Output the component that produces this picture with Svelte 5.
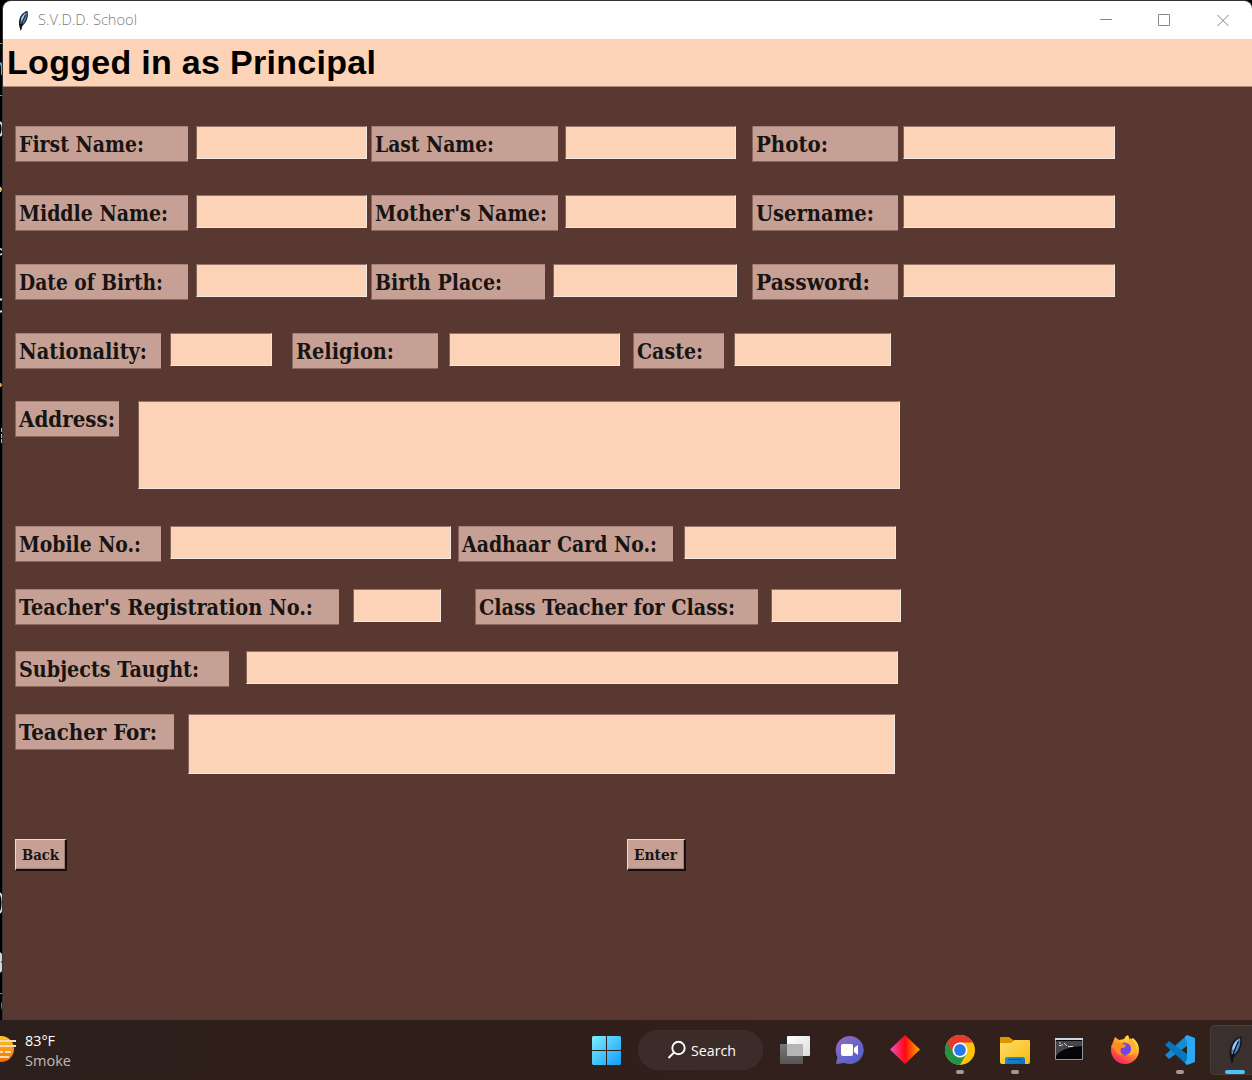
<script>
  // Every form row starts at the window's left padding; x and w are in pixels, t is the caption's width.
  const L = (text, x, w, t) => ({ text, x, w, t });
  const E = (x, w, h = 33) => ({ x, w, h });
  const source = [
    { h: 69, items: [L('First Name:', 15, 173, 125), E(196, 171), L('Last Name:', 371, 187, 119), E(565, 171), L('Photo:', 752, 146, 72), E(903, 212)] },
    { h: 69, items: [L('Middle Name:', 15, 173, 149), E(196, 171), L("Mother's Name:", 371, 187, 172), E(565, 171), L('Username:', 752, 146, 118), E(903, 212)] },
    { h: 69, items: [L('Date of Birth:', 15, 173, 144), E(196, 171), L('Birth Place:', 371, 174, 127), E(553, 184), L('Password:', 752, 146, 114), E(903, 212)] },
    { h: 68, items: [L('Nationality:', 15, 146, 128), E(170, 102), L('Religion:', 292, 146, 98), E(449, 171), L('Caste:', 633, 91, 66), E(734, 157)] },
    { h: 125, items: [L('Address:', 15, 104, 96), E(138, 762, 88)] },
    { h: 63, items: [L('Mobile No.:', 15, 146, 122), E(170, 281), L('Aadhaar Card No.:', 458, 215, 195), E(684, 212)] },
    { h: 62, items: [L("Teacher's Registration No.:", 15, 324, 294), E(353, 88), L('Class Teacher for Class:', 475, 283, 256), E(771, 130)] },
    { h: 63, items: [L('Subjects Taught:', 15, 214, 180), E(246, 652)] },
    { h: 125, items: [L('Teacher For:', 15, 159, 138), E(188, 707, 60)] }
  ];
  const rows = source.map((row) => {
    let edge = 3;
    return {
      h: row.h,
      items: row.items.map((item) => {
        const gap = item.x - edge;
        edge = item.x + item.w;
        return { ...item, gap };
      })
    };
  });
</script>

{#snippet fit(text, width, height, base, adjust = 'spacingAndGlyphs')}
  <svg class="fit" {width} {height}><text x="0" y={base} textLength={width} lengthAdjust={adjust}>{text}</text></svg>
{/snippet}

{#snippet feather()}
  <path d="M0 20C-2 10 2 1 11-2c2 6 0 15-6 20l-2 3-1 5z" fill="#14171c" />
  <path d="M1.500 16C1 9 4 2.500 10 0c1 5-1 12-5 16z" fill="#4b83c5" />
  <path d="M2.500 12C2 8 5 3.500 8.500 1.500L4.500 11z" fill="#b4cce5" />
  <path d="M2.300 24Q3 13 8.500 3.500" fill="none" stroke="#111" stroke-width="1.300" />
{/snippet}

<div class="screen">
  <div class="desktop">
    <svg class="behind" width="3" height="1020">
      <path d="M0 43.500h3M0 95.500h3M0 993.500h3" stroke="#6e9db2" />
      <path d="M0 63q2 1 2 5v7" fill="none" stroke="#4ab2dd" stroke-width="2" />
      <path d="M0 122q2.500 2 2.500 7t-2.500 7M0 893q2.500 3 2.500 10t-2.500 10" fill="none" stroke="#d7e8f4" stroke-width="1.800" />
      <path d="M0 187h1l1 2-1 3H0z" fill="#e6c377" />
      <path d="M0 249q3 0 3 4l-3 2" fill="none" stroke="#d9e3e8" stroke-width="1.500" />
      <path d="M0 299.500h3M0 311.500h3" stroke="#e4e4ee" stroke-width="2" />
      <path d="M2.500 300v11" stroke="#3535a0" />
      <path d="M0 383h1l1 2-1 2H0z" fill="#e6a65b" />
      <path d="M1 430h2M1 436h2M1 441h2" stroke="#a4bac7" stroke-width="4" />
      <path d="M0 952l3 3v5l-2 2 2 2v6l-3 3z" fill="#d5d5d5" />
      <path d="M3 1001q-2 4 0 10" fill="none" stroke="#cbba86" stroke-width="1.500" />
    </svg>
    <main class="window">
      <header class="titlebar">
        <svg class="logo" width="14" height="21" viewBox="-3 -3 16 29">{@render feather()}</svg>
        <span class="title">{@render fit('S.V.D.D. School', 99, 20, 15)}</span>
        <svg class="controls" width="160" height="38" fill="none" stroke="#858585">
          <path d="M8 18.500h12M125.500 14l11 11M136.500 14l-11 11" />
          <rect x="66.500" y="13.500" width="11" height="11" rx=".5" />
        </svg>
      </header>
      <div class="banner">{@render fit('Logged in as Principal', 369, 46, 35, 'spacing')}</div>
      <form class="form">
        {#each rows as row}
          <div class="row" style:height="{row.h}px">
            {#each row.items as item}
              {#if item.text}
                <span class="label" style:width="{item.w}px" style:margin-left="{item.gap}px">
                  {@render fit(item.text, item.t, 36, 26)}
                </span>
              {:else}
                <span class="entry" style:width="{item.w}px" style:height="{item.h}px" style:margin-left="{item.gap}px"></span>
              {/if}
            {/each}
          </div>
        {/each}
        <div class="actions">
          <button type="button" class="back">{@render fit('Back', 37, 30, 20)}</button>
          <button type="button" class="enter">{@render fit('Enter', 43, 30, 20)}</button>
        </div>
      </form>
    </main>
  </div>

  <footer class="taskbar">
    <div class="weather">
      <svg width="18" height="60">
        <defs><linearGradient id="sun" x2="0" y2="1"><stop stop-color="#ffc52b" /><stop offset="1" stop-color="#f56b0c" /></linearGradient></defs>
        <circle cx="1" cy="29" r="13" fill="url(#sun)" />
        <path d="M0 21h16M0 26h16M0 32h3M5 32h6M0 37h9" stroke="#f8ddb0" stroke-width="2" />
      </svg>
      <div class="readings">
        <span>{@render fit('83°F', 30, 20, 15)}</span>
        <span class="dim">{@render fit('Smoke', 46, 20, 15)}</span>
      </div>
    </div>
    <svg class="start" width="30" height="60">
      <defs><linearGradient id="win" gradientUnits="userSpaceOnUse" x1="0" y1="16" x2="29" y2="45"><stop stop-color="#7eeeff" /><stop offset="1" stop-color="#109cfb" /></linearGradient></defs>
      <path d="M1 16h13v14H0V17zM15 16h13l1 1v13H15zM0 31h14v14H1l-1-1zM15 31h14v13l-1 1H15z" fill="url(#win)" />
    </svg>
    <div class="search">
      <svg width="20" height="20" fill="none" stroke="#fff" stroke-width="1.900"><circle cx="11.500" cy="8" r="6.200" /><path d="M7 12.500L1.500 18" /></svg>
      {@render fit('Search', 45, 20, 16)}
    </div>
    <div class="apps">
      <svg class="app">
        <defs>
          <linearGradient id="pane" x2="1" y2="1"><stop stop-color="#fff" /><stop offset="1" stop-color="#dcdcdc" /></linearGradient>
          <linearGradient id="shade" x2="0" y2="1"><stop stop-color="#777" /><stop offset="1" stop-color="#555" /></linearGradient>
        </defs>
        <rect x="13" y="24" width="23" height="20" rx="1" fill="url(#shade)" />
        <rect x="20" y="16" width="23" height="20" rx="1" fill="url(#pane)" />
        <path d="M20 24h16v12H20z" fill="#b5b5b5" />
      </svg>
      <svg class="app">
        <defs><linearGradient id="chat" x1="0" y1="0" x2="1" y2="1"><stop stop-color="#a065b5" /><stop offset=".5" stop-color="#6a68c9" /><stop offset="1" stop-color="#5059c9" /></linearGradient></defs>
        <path d="M27.500 16a14 14 0 1 1-5 27l-8.500 1 1.500-7A14 14 0 0 1 27.500 16z" fill="url(#chat)" />
        <rect x="19" y="24" width="12" height="12" rx="2" fill="#fff" /><path d="M32 28l4-3v10l-4-3z" fill="#fff" />
      </svg>
      <svg class="app">
        <defs><linearGradient id="gem"><stop stop-color="#f452ce" /><stop offset=".5" stop-color="#ff0710" /><stop offset="1" stop-color="#ffae00" /></linearGradient></defs>
        <path d="M28 15l15 14.500L28 44 13 29.500z" fill="url(#gem)" />
      </svg>
      <svg class="app">
        <circle cx="28" cy="30" r="15" fill="#ffc20e" />
        <path d="M28 30L15 22.500A15 15 0 0 0 28 45l6.500-11.500z" fill="#219447" />
        <path d="M15 22.500A15 15 0 0 1 41 22.500H28l-6.500 11z" fill="#e33b2e" />
        <circle cx="28" cy="30" r="7.500" fill="#fff" /><circle cx="28" cy="30" r="5.900" fill="#2878ee" />
        <rect class="dot" x="24" y="50" width="8" height="4" rx="2" />
      </svg>
      <svg class="app">
        <defs>
          <linearGradient id="folder" x2="1" y2="1"><stop stop-color="#ffdc69" /><stop offset="1" stop-color="#f9ba10" /></linearGradient>
          <linearGradient id="tray" x2="1" y2="1"><stop stop-color="#2095dc" /><stop offset="1" stop-color="#096cbd" /></linearGradient>
        </defs>
        <path d="M13 18q0-1 1-1h8l4 3v6H13z" fill="#dc9604" />
        <path d="M13 23h11l3-3h15q1 0 1 1v21q0 2-2 2H15q-2 0-2-2z" fill="url(#folder)" />
        <path d="M18 44v-5q0-2 2-2h16q2 0 2 2v5z" fill="url(#tray)" /><path d="M21 39.500h14" stroke="#07549a" />
        <rect class="dot" x="24" y="50" width="8" height="4" rx="2" />
      </svg>
      <svg class="app">
        <path d="M13.500 18.500h27v21h-27z" fill="#050505" stroke="#8d99a3" />
        <path d="M14 21h26v5q-20 1-26 10z" fill="#44464a" />
        <path d="M13 19h28" stroke="#cbd6dc" stroke-width="2" />
        <path d="M17 23h2M17 25.500h2M20 24v2M22 23l3 3M26 26.500h5" stroke="#d5d5d5" fill="none" />
      </svg>
      <svg class="app">
        <defs>
          <linearGradient id="fox" x1=".8" y1="0" x2=".2" y2="1"><stop stop-color="#fff44b" /><stop offset=".35" stop-color="#ffb52b" /><stop offset=".65" stop-color="#ff613c" /><stop offset="1" stop-color="#f2156c" /></linearGradient>
        </defs>
        <path d="M18 17l4 3 5-1q1-3 4-4l2 5 3-2q6 5 6 12A14 14 0 0 1 14 30q0-5 2-8z" fill="url(#fox)" />
        <circle cx="28" cy="29" r="6.500" fill="#7542e5" />
        <path d="M14 27q5-6 13-3l2 2q-1 2-5 2-2 5 3 7-8 1-10-7z" fill="#ff8b22" />
        <path d="M28 23q6 0 6 6 0 5-5 6 9 1 10-6 0-7-6-11 1 3-5 5z" fill="#ffb02e" />
      </svg>
      <svg class="app">
        <path d="M35 15v11L17 39l-4-4z" fill="#168bd4" />
        <path d="M13 25l4-4 18 13v11z" fill="#0875bd" />
        <path d="M35 15l8 3v24l-8 3-2-2 2-4V22l-2-5z" fill="#2ba8f4" />
        <rect class="dot" x="24" y="50" width="8" height="4" rx="2" />
      </svg>
      <svg class="app">
        <rect x="3.500" y="5.500" width="50" height="49" rx="4" fill="#3a302e" stroke="#493e3a" />
        <g transform="translate(23 18)">{@render feather()}</g>
        <rect x="18" y="50" width="20" height="4" rx="2" fill="#4cc2ff" />
      </svg>
    </div>
  </footer>
</div>

<style>
  :global(body) { margin: 0; overflow: hidden; background: #000; }
  .screen { width: 1252px; height: 1080px; overflow: hidden; background: #000; display: flex; flex-direction: column; }
  svg { display: block; flex: none; }
  .fit { overflow: visible; fill: currentColor; }
  .desktop { display: flex; height: 1020px; flex: none; }
  .window { flex: 1; display: flex; flex-direction: column; margin-top: 1px; border-radius: 8px 8px 0 0; overflow: hidden; background: #593831; box-shadow: 0 0 0 1px #333; }
  .titlebar { height: 38px; background: #fff; display: flex; align-items: center; flex: none; }
  .logo { margin: 0 8px 0 13px; }
  .title { color: #7c7c7c; font: 14.500px "Open Sans", sans-serif; font-weight: 300; }
  .controls { margin-left: auto; }
  .banner { height: 48px; padding-left: 4px; box-sizing: border-box; flex: none; background: #fdd3b8; border-bottom: 1px solid #ab8878; font: bold 34px "Liberation Sans", sans-serif; color: #000; }
  .form { padding-top: 39px; }
  .row { display: flex; align-items: flex-start; }
  .label { box-sizing: border-box; height: 36px; padding-left: 4px; background: #c7a095; box-shadow: inset 1px -1px #8a675e, inset 0 1px #a98279; color: #171412; font: bold 21.500px "DejaVu Serif Condensed", "DejaVu Serif", serif; font-stretch: condensed; flex: none; }
  .entry { box-sizing: border-box; flex: none; background: #fdd3b8; border: 1px solid; border-color: #94766a #f3e8e3 #f3e8e3 #84655b; }
  .actions { display: flex; padding-left: 12px; }
  button { box-sizing: border-box; height: 32px; padding: 0 0 0 6px; border: 1px solid; border-width: 1px 2px 2px 1px; border-color: #fbd7c8 #15100f #15100f #fbd7c8; box-shadow: inset -1px -1px #a07f76; background: #c7a095; color: #171412; font: bold 14.500px "DejaVu Serif Condensed", "DejaVu Serif", serif; font-stretch: condensed; }
  .back { width: 52px; }
  .enter { width: 59px; margin-left: 560px; }
  .taskbar { height: 60px; flex: none; display: flex; align-items: center; background: linear-gradient(90deg, #2d1f1b, #33201b); color: #fff; font: 14.500px "Open Sans", "Noto Sans", sans-serif; }
  .weather { display: flex; flex: none; width: 592px; }
  .readings { display: flex; flex-direction: column; padding: 11px 0 0 7px; }
  .dim { color: #c2bbb8; }
  .search { box-sizing: border-box; flex: none; width: 125px; height: 40px; margin-left: 16px; border-radius: 20px; padding-left: 28px; display: flex; align-items: center; gap: 4px; background: #3b2b29; border: 1px solid #40302d; }
  .apps { display: flex; flex: none; margin-left: 4px; }
  .app { width: 55px; height: 60px; overflow: visible; }
  .dot { fill: #a39a98; }
</style>
